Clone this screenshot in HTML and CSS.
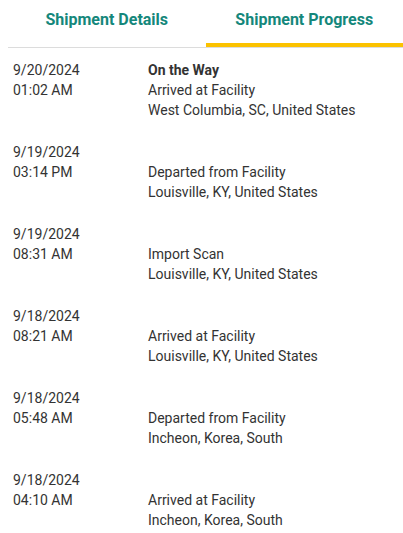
FILE: index.html
```html
<!DOCTYPE html>
<html lang="en">
<head>
    <meta charset="UTF-8">
    <meta name="viewport" content="width=device-width, initial-scale=1.0">
    <title>Shipment Progress</title>
    <link rel="stylesheet" href="styles.css">
</head>
<body>
    <div class="tabs">
        <div class="tab">Shipment Details</div>
        <div class="tab active">Shipment Progress</div>
    </div>

    <div class="progress">
        <div class="entry">
            <div class="when">
                <div>9/20/2024</div>
                <div>01:02 AM</div>
            </div>
            <div class="what">
                <div class="status">On the Way</div>
                <div>Arrived at Facility</div>
                <div>West Columbia, SC, United States</div>
            </div>
        </div>
        <div class="entry">
            <div class="when">
                <div>9/19/2024</div>
                <div>03:14 PM</div>
            </div>
            <div class="what">
                <div class="status"></div>
                <div>Departed from Facility</div>
                <div>Louisville, KY, United States</div>
            </div>
        </div>
        <div class="entry">
            <div class="when">
                <div>9/19/2024</div>
                <div>08:31 AM</div>
            </div>
            <div class="what">
                <div class="status"></div>
                <div>Import Scan</div>
                <div>Louisville, KY, United States</div>
            </div>
        </div>
        <div class="entry">
            <div class="when">
                <div>9/18/2024</div>
                <div>08:21 AM</div>
            </div>
            <div class="what">
                <div class="status"></div>
                <div>Arrived at Facility</div>
                <div>Louisville, KY, United States</div>
            </div>
        </div>
        <div class="entry">
            <div class="when">
                <div>9/18/2024</div>
                <div>05:48 AM</div>
            </div>
            <div class="what">
                <div class="status"></div>
                <div>Departed from Facility</div>
                <div>Incheon, Korea, South</div>
            </div>
        </div>
        <div class="entry">
            <div class="when">
                <div>9/18/2024</div>
                <div>04:10 AM</div>
            </div>
            <div class="what">
                <div class="status"></div>
                <div>Arrived at Facility</div>
                <div>Incheon, Korea, South</div>
            </div>
        </div>
    </div>
</body>
</html>
```

FILE: styles.css
```css
body {
    font-family: Roboto, 'Liberation Sans', sans-serif;
    margin: 0;
    padding-left: 8px;
    color: #333;
    background: #fff;
}
.tabs {
    display: flex;
    border-bottom: 1px solid #dcdcdc;
}
.tab {
    flex: 1;
    text-align: center;
    font-size: 16px;
    font-weight: 700;
    color: #14877b;
    height: 43px;
    line-height: 40px;
    border-bottom: 4px solid transparent;
}
.tab.active {
    border-bottom-color: #fbc200;
}
.progress {
    padding: 12px 0 0 5px;
}
.entry {
    display: flex;
    font-size: 14px;
    line-height: 20px;
    margin-bottom: 22px;
}
.when {
    width: 135px;
}
.status {
    font-weight: 700;
    min-height: 20px;
}
```
